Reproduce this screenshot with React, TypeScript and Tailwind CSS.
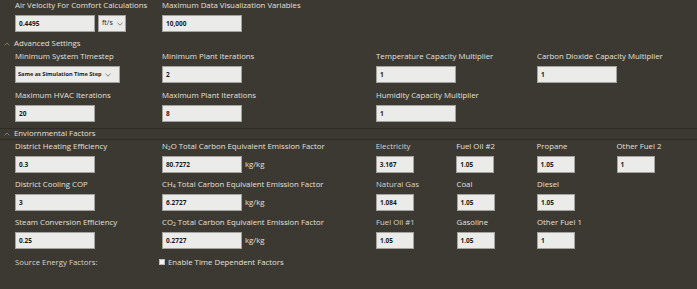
import React from 'react';

const font = { fontFamily: '"Open Sans", "Noto Sans", sans-serif' };

function Label({ children, dim = false }: { children: React.ReactNode; dim?: boolean }) {
  return (
    <div className={`h-[12px] leading-[12px] text-[7.8px] whitespace-nowrap ${dim ? 'text-[#d8d5ce]' : 'text-[#e4e1da]'}`}>
      {children}
    </div>
  );
}

function Box({ value, w = 'w-[80px]' }: { value: string; w?: string }) {
  return (
    <div className={`${w} h-[17px] mt-[4px] bg-[#ebebea] border border-[#a5a39f] flex items-center pl-[3px] text-[6.5px] font-bold text-[#1a1a1a]`}>
      {value}
    </div>
  );
}

function Chevron() {
  return (
    <svg width="6" height="4" viewBox="0 0 6 4" className="mr-[4px]">
      <path d="M0.5 3.5 L3 1 L5.5 3.5" stroke="#8d8980" strokeWidth="0.8" fill="none" />
    </svg>
  );
}

function Header({ title, lined = false }: { title: string; lined?: boolean }) {
  return (
    <div
      className={`h-[12px] flex items-center pl-[4px] text-[7.8px] text-[#e4e1da] ${
        lined ? 'border-t border-b border-[#2f2c28]' : ''
      }`}
    >
      <Chevron />
      {title}
    </div>
  );
}

export default function App() {
  return (
    <div className="w-[697px] h-[289px] bg-[#3c3832] overflow-hidden" style={font}>
      {/* top */}
      <div className="flex pl-[15px]">
        <div className="w-[147px]">
          <div className="h-[11px] leading-[11px] text-[7.8px] text-[#e4e1da] whitespace-nowrap">Air Velocity For Comfort Calculations</div>
          <div className="flex gap-[3px]">
            <Box value="0.4495" />
            <div className="w-[28px] h-[17px] mt-[4px] bg-[#ebebea] border border-[#a5a39f] flex items-center pl-[3px] text-[7px] text-[#1a1a1a]">
              ft/s
              <svg width="6" height="4" viewBox="0 0 6 4" className="ml-[4px]">
                <path d="M0.5 0.8 L3 3.2 L5.5 0.8" stroke="#555" strokeWidth="0.7" fill="none" />
              </svg>
            </div>
          </div>
        </div>
        <div>
          <div className="h-[11px] leading-[11px] text-[7.8px] text-[#e4e1da] whitespace-nowrap">Maximum Data Visualization Variables</div>
          <Box value="10,000" />
        </div>
      </div>

      {/* advanced */}
      <div className="mt-[6px]">
        <Header title="Advanced Settings" />
        <div className="pl-[15px]">
          <div className="flex">
            <div className="w-[147px]">
              <Label>Minimum System Timestep</Label>
              <div className="w-[105px] h-[17px] mt-[4px] bg-[#ebebea] border border-[#a5a39f] flex items-center pl-[2px] text-[5.6px] font-bold text-[#1a1a1a] whitespace-nowrap">
                Same as Simulation Time Step
                <svg width="6" height="4" viewBox="0 0 6 4" className="ml-[3px]">
                  <path d="M0.5 0.8 L3 3.2 L5.5 0.8" stroke="#555" strokeWidth="0.7" fill="none" />
                </svg>
              </div>
            </div>
            <div className="w-[214px]">
              <Label>Minimum Plant Iterations</Label>
              <Box value="2" />
            </div>
            <div className="w-[161px]">
              <Label>Temperature Capacity Multiplier</Label>
              <Box value="1" />
            </div>
            <div>
              <Label>Carbon Dioxide Capacity Multiplier</Label>
              <Box value="1" />
            </div>
          </div>
          <div className="flex mt-[6px]">
            <div className="w-[147px]">
              <Label>Maximum HVAC Iterations</Label>
              <Box value="20" />
            </div>
            <div className="w-[214px]">
              <Label>Maximum Plant Iterations</Label>
              <Box value="8" />
            </div>
            <div>
              <Label>Humidity Capacity Multiplier</Label>
              <Box value="1" />
            </div>
          </div>
        </div>
      </div>

      {/* environmental */}
      <div className="mt-[6px]">
        <Header title="Enviornmental Factors" lined />
        <div className="pl-[15px]">
          {[
            {
              a: ['District Heating Efficiency', '0.3'],
              b: [<>N<sub className="text-[5px]">2</sub>O Total Carbon Equivalent Emission Factor</>, '80.7272'],
              fuels: [['Electricity', '3.167'], ['Fuel Oil #2', '1.05'], ['Propane', '1.05'], ['Other Fuel 2', '1']],
            },
            {
              a: ['District Cooling COP', '3'],
              b: [<>CH<sub className="text-[5px]">4</sub> Total Carbon Equivalent Emission Factor</>, '6.2727'],
              fuels: [['Natural Gas', '1.084'], ['Coal', '1.05'], ['Diesel', '1.05']],
            },
            {
              a: ['Steam Conversion Efficiency', '0.25'],
              b: [<>CO<sub className="text-[5px]">2</sub> Total Carbon Equivalent Emission Factor</>, '0.2727'],
              fuels: [['Fuel Oil #1', '1.05'], ['Gasoline', '1.05'], ['Other Fuel 1', '1']],
            },
          ].map((row, i) => (
            <div key={i} className={`flex ${i > 0 ? 'mt-[5px]' : ''}`}>
              <div className="w-[147px]">
                <Label>{row.a[0]}</Label>
                <Box value={row.a[1] as string} />
              </div>
              <div className="w-[214px]">
                <Label>{row.b[0]}</Label>
                <div className="flex items-center">
                  <Box value={row.b[1] as string} />
                  <span className="mt-[4px] ml-[3px] text-[7.8px] text-[#e4e1da]">kg/kg</span>
                </div>
              </div>
              {row.fuels.map(([name, v], j) => (
                <div key={j} className={j === 2 ? 'w-[80px]' : 'w-[80.5px]'}>
                  <Label dim={j === 0}>{name}</Label>
                  <Box value={v} w="w-[38px]" />
                </div>
              ))}
            </div>
          ))}
          <div className="flex mt-[7px] items-center">
            <div className="w-[144px]">
              <Label dim>Source Energy Factors:</Label>
            </div>
            <div className="flex items-center">
              <div className="w-[6px] h-[6px] bg-[#f2f2f2] border border-[#bdbdbd] mr-[3px]" />
              <Label>Enable Time Dependent Factors</Label>
            </div>
          </div>
        </div>
      </div>
    </div>
  );
}
